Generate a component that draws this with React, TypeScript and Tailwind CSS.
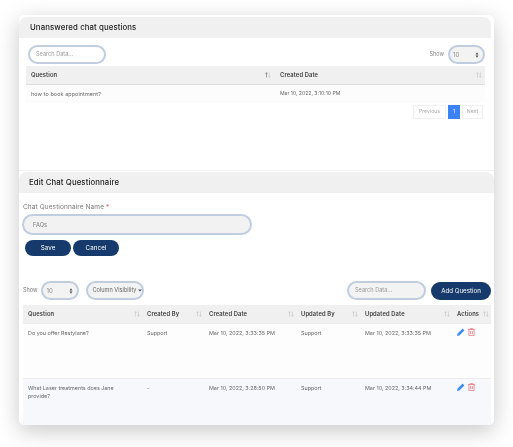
import React from "react";

const font = { fontFamily: "Inter, 'Noto Sans', sans-serif" };

function Sort({ active }: { active?: boolean }) {
  return (
    <svg width="6" height="6" viewBox="0 0 6 6" className="shrink-0" fill="none" strokeWidth="0.7">
      <path d="M1.5 5.5V.7M.5 1.8 1.5.7l1 1.1" stroke={active ? "#777" : "#c9c9c9"} />
      <path d="M4.4.5v4.8M3.5 4.2l.9 1.1 1-1.1" stroke="#c9c9c9" />
    </svg>
  );
}

function Pill({ className, children }: { className: string; children: React.ReactNode }) {
  return (
    <div className={"flex items-center rounded-full border-2 border-[#bfcddf] text-[5.6px] text-[#8a8a8a] " + className}>
      {children}
    </div>
  );
}

function UpDown() {
  return (
    <svg width="4" height="6" viewBox="0 0 4 6" className="ml-auto shrink-0" fill="#555">
      <path d="M2 .3 3.5 2.4h-3zM2 5.7.5 3.6h3z" />
    </svg>
  );
}

function Pen() {
  return (
    <svg width="8" height="8" viewBox="0 0 8 8" fill="#3f8fec">
      <path d="M5.6.6 7.4 2.4 2.4 7.4 0 8l.6-2.4z" />
    </svg>
  );
}

function Trash() {
  return (
    <svg width="7" height="8" viewBox="0 0 7 8" fill="none" stroke="#e58a8e" strokeWidth="0.9">
      <path d="M0 1.4h7M2.4 1.2V.4h2.2v.8" />
      <path d="M.9 1.6h5.2v6H.9zM2.6 3v3.2M4.4 3v3.2" />
    </svg>
  );
}

const cols = "grid grid-cols-[119px_62px_92px_64px_92px_39px]";

function Head({ label }: { label: string }) {
  return (
    <div className="flex items-center pl-[5px] pr-[2px] font-semibold text-[#3d3d3d]">
      <span className="whitespace-nowrap">{label}</span>
      <span className="ml-auto"><Sort /></span>
    </div>
  );
}

function Row({ cells, bg, h }: { cells: string[]; bg: string; h: string }) {
  return (
    <div className={`${cols} ${bg} ${h} border-t border-[#ececf0] text-[5.4px] leading-[8px] text-[#666]`}>
      {cells.map((c, i) => (
        <div key={i} className="pl-[5px] pr-[6px] pt-[5px]">{c}</div>
      ))}
      <div className="flex gap-[3px] pl-[5px] pt-[4px]">
        <Pen />
        <Trash />
      </div>
    </div>
  );
}

export default function App() {
  return (
    <div style={font} className="h-[447px] w-[513px] overflow-hidden bg-white pl-[19px] pt-[15px] blur-[0.5px]">
      <div className="h-[410px] w-[475px] overflow-hidden rounded-[5px] bg-white pt-[2px] shadow-[0_6px_22px_rgba(0,0,0,0.22)]">
        <section className="h-[154px]">
          <div className="flex h-[21px] w-[472px] items-center rounded-t-[8px] bg-[#f0f0f0] pl-[11px] text-[7.8px] font-medium tracking-[0.1px] text-[#222]">
            Unanswered chat questions
          </div>
          <div className="flex items-center pl-[9px] pr-[9px] pt-[7px]">
            <Pill className="h-[19px] w-[78px] pl-[6px] text-[#999]">Search Data...</Pill>
            <span className="ml-auto mr-[4px] text-[5.5px] text-[#888]">Show</span>
            <Pill className="h-[19px] w-[37px] bg-[#f3f3f3] pl-[3px] pr-[4px] text-[6px]">10<UpDown /></Pill>
          </div>
          <div className="ml-[7px] mt-[2px] w-[459px]">
            <div className="flex h-[19px] border-b border-[#dedede] bg-[#f0f0f0] text-[5.8px] tracking-[0.12px]">
              <div className="flex w-[249px] items-center pl-[5px] pr-[4px] font-semibold text-[#3d3d3d]">
                Question<span className="ml-auto"><Sort active /></span>
              </div>
              <div className="flex flex-1 items-center pl-[5px] pr-[3px] font-semibold text-[#3d3d3d]">
                Created Date<span className="ml-auto"><Sort /></span>
              </div>
            </div>
            <div className="flex h-[18px] items-center bg-[#fcfcfc] text-[5.4px] text-[#666]">
              <div className="w-[249px] pl-[5px] tracking-[0.1px]">how to book appointment?</div>
              <div className="pl-[5px] text-[5.1px]">Mar 10, 2022, 3:10:10 PM</div>
            </div>
            <div className="mt-[2px] flex justify-end pr-[2px] text-[5.2px] text-[#aaa]">
              <div className="flex h-[14px] w-[33px] items-center justify-center rounded-l-[2px] border border-[#f0f0f0]">Previous</div>
              <div className="ml-[2px] flex h-[14px] w-[12px] items-center justify-center bg-[#3b82f6] text-white">1</div>
              <div className="ml-[2px] flex h-[14px] w-[21px] items-center justify-center rounded-r-[2px] border border-[#f0f0f0]">Next</div>
            </div>
          </div>
        </section>

        <section className="-mt-px border-t border-[#f1f1f1]">
          <div className="mt-[1px] flex h-[21px] items-center rounded-t-[8px] bg-[#f0f0f0] pl-[10px] text-[7.8px] font-medium tracking-[0.1px] text-[#222]">
            Edit Chat Questionnaire
          </div>
          <div className="pl-[3px] pt-[10px] text-[6.5px] leading-[8px] tracking-[0.1px] text-[#777]">
            <div className="pl-px">Chat Questionnaire Name <span className="text-[#e55]">*</span></div>
            <Pill className="mt-[3px] h-[21px] w-[230px] bg-[#f2f2f2] pl-[9px] text-[5.5px] text-[#777]">FAQs</Pill>
            <div className="ml-[3px] mt-[5px] flex gap-[2px]">
              <button className="h-[16px] w-[46px] rounded-full bg-[#163a6b] text-[6.2px] text-white">Save</button>
              <button className="h-[16px] w-[46px] rounded-full bg-[#163a6b] text-[6.2px] text-white">Cancel</button>
            </div>
          </div>

          <div className="flex items-center pl-[4px] pr-[3px] pt-[25px]">
            <span className="mr-[4px] text-[5.5px] text-[#777]">Show</span>
            <Pill className="h-[19px] w-[38px] bg-[#f3f3f3] pl-[3px] pr-[4px] text-[6px]">10<UpDown /></Pill>
            <Pill className="ml-[7px] h-[19px] w-[58px] bg-[#f3f3f3] pl-[4px] text-[5.4px] text-[#666]">
              <span className="whitespace-nowrap">Column Visibility</span>
              <svg width="4" height="3" viewBox="0 0 4 3" className="ml-[2px] shrink-0" fill="#555">
                <path d="M0 .5h4L2 2.6z" />
              </svg>
            </Pill>
            <Pill className="ml-auto h-[19px] w-[79px] bg-[#f3f3f3] pl-[6px] text-[#999]">Search Data...</Pill>
            <button className="ml-[5px] h-[18px] w-[60px] rounded-full bg-[#163a6b] text-[6.2px] text-white">Add Question</button>
          </div>

          <div className="ml-[4px] mt-[5px] w-[468px]">
            <div className={`${cols} h-[18px] bg-[#f0f0f0] text-[5.8px] tracking-[0.12px]`}>
              <Head label="Question" />
              <Head label="Created By" />
              <Head label="Created Date" />
              <Head label="Updated By" />
              <Head label="Updated Date" />
              <Head label="Actions" />
            </div>
            <Row
              bg="bg-[#fdfdfd]"
              h="h-[55px]"
              cells={["Do you offer Restylane?", "Support", "Mar 10, 2022, 3:33:35 PM", "Support", "Mar 10, 2022, 3:33:35 PM"]}
            />
            <Row
              bg="bg-[#f7f8fc]"
              h="h-[48px]"
              cells={["What Laser treatments does Jane provide?", "-", "Mar 10, 2022, 3:28:50 PM", "Support", "Mar 10, 2022, 3:34:44 PM"]}
            />
          </div>
        </section>
      </div>
    </div>
  );
}
